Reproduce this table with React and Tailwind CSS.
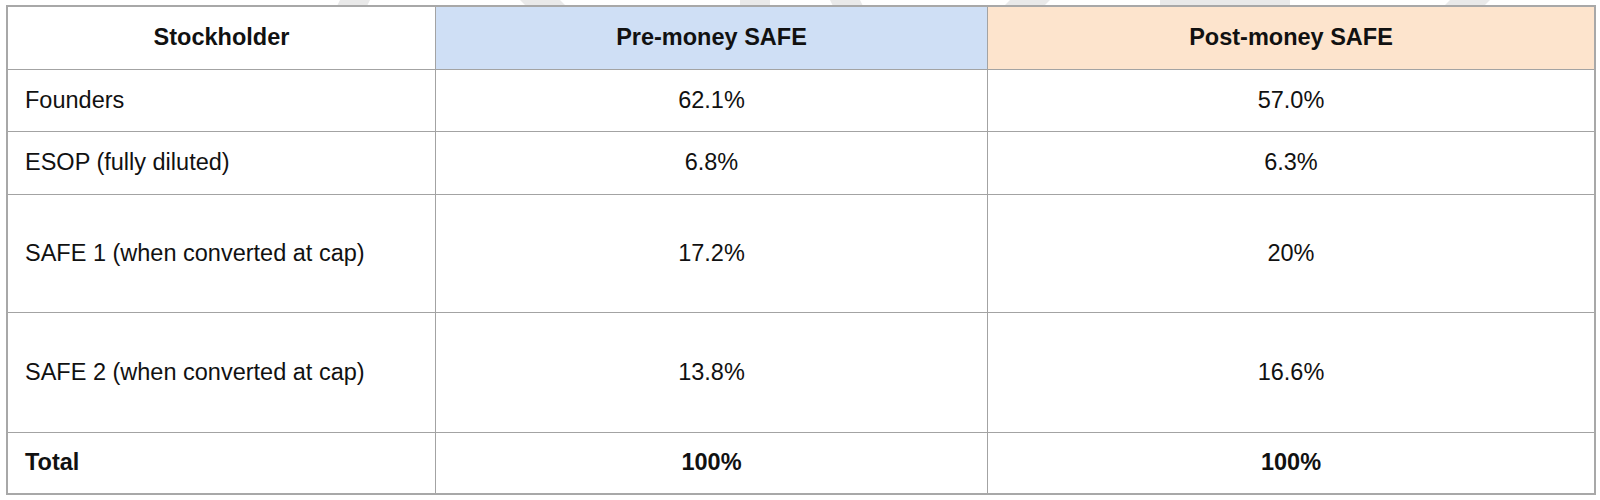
import React from "react";

const rows = [
  { label: "Founders", pre: "62.1%", post: "57.0%" },
  { label: "ESOP (fully diluted)", pre: "6.8%", post: "6.3%" },
  { label: "SAFE 1 (when converted at cap)", pre: "17.2%", post: "20%" },
  { label: "SAFE 2 (when converted at cap)", pre: "13.8%", post: "16.6%" },
];

function Watermark() {
  return (
    <svg
      className="absolute left-0 top-0 pointer-events-none"
      width="1600"
      height="20"
      viewBox="0 0 1600 20"
    >
      <g fill="#e9e9e9">
        <polygon points="340,0 370,0 360,20 330,20" />
        <polygon points="520,0 560,0 580,20 540,20" />
        <polygon points="740,0 770,0 770,20 740,20" />
        <polygon points="830,0 860,0 870,20 840,20" />
        <polygon points="1010,0 1050,0 1030,20 990,20" />
        <polygon points="1160,0 1290,0 1290,20 1160,20" />
        <polygon points="1450,0 1490,0 1470,20 1430,20" />
      </g>
    </svg>
  );
}

export default function App() {
  const font = { fontFamily: '"Liberation Sans", Arial, sans-serif' };
  return (
    <div
      className="relative w-[1600px] h-[500px] bg-white pt-[5px] pl-[6px] text-[23.5px] text-[#111111]"
      style={font}
    >
      <Watermark />
      <div className="relative grid w-[1590px] h-[490px] grid-cols-[427px_551px_606px] grid-rows-[62px_61px_62px_117px_119px_60px] gap-px bg-[#a3a3a3] border-2 border-[#a8a8a8]">
        <div className="bg-white flex items-center justify-center font-bold">Stockholder</div>
        <div className="bg-[#cfdff5] flex items-center justify-center font-bold">Pre-money SAFE</div>
        <div className="bg-[#fde4cd] flex items-center justify-center font-bold">Post-money SAFE</div>
        {rows.map((r) => (
          <React.Fragment key={r.label}>
            <div className="bg-white flex items-center pl-[17px]">{r.label}</div>
            <div className="bg-white flex items-center justify-center">{r.pre}</div>
            <div className="bg-white flex items-center justify-center">{r.post}</div>
          </React.Fragment>
        ))}
        <div className="bg-white flex items-center pl-[17px] font-bold">Total</div>
        <div className="bg-white flex items-center justify-center font-bold">100%</div>
        <div className="bg-white flex items-center justify-center font-bold">100%</div>
      </div>
    </div>
  );
}
